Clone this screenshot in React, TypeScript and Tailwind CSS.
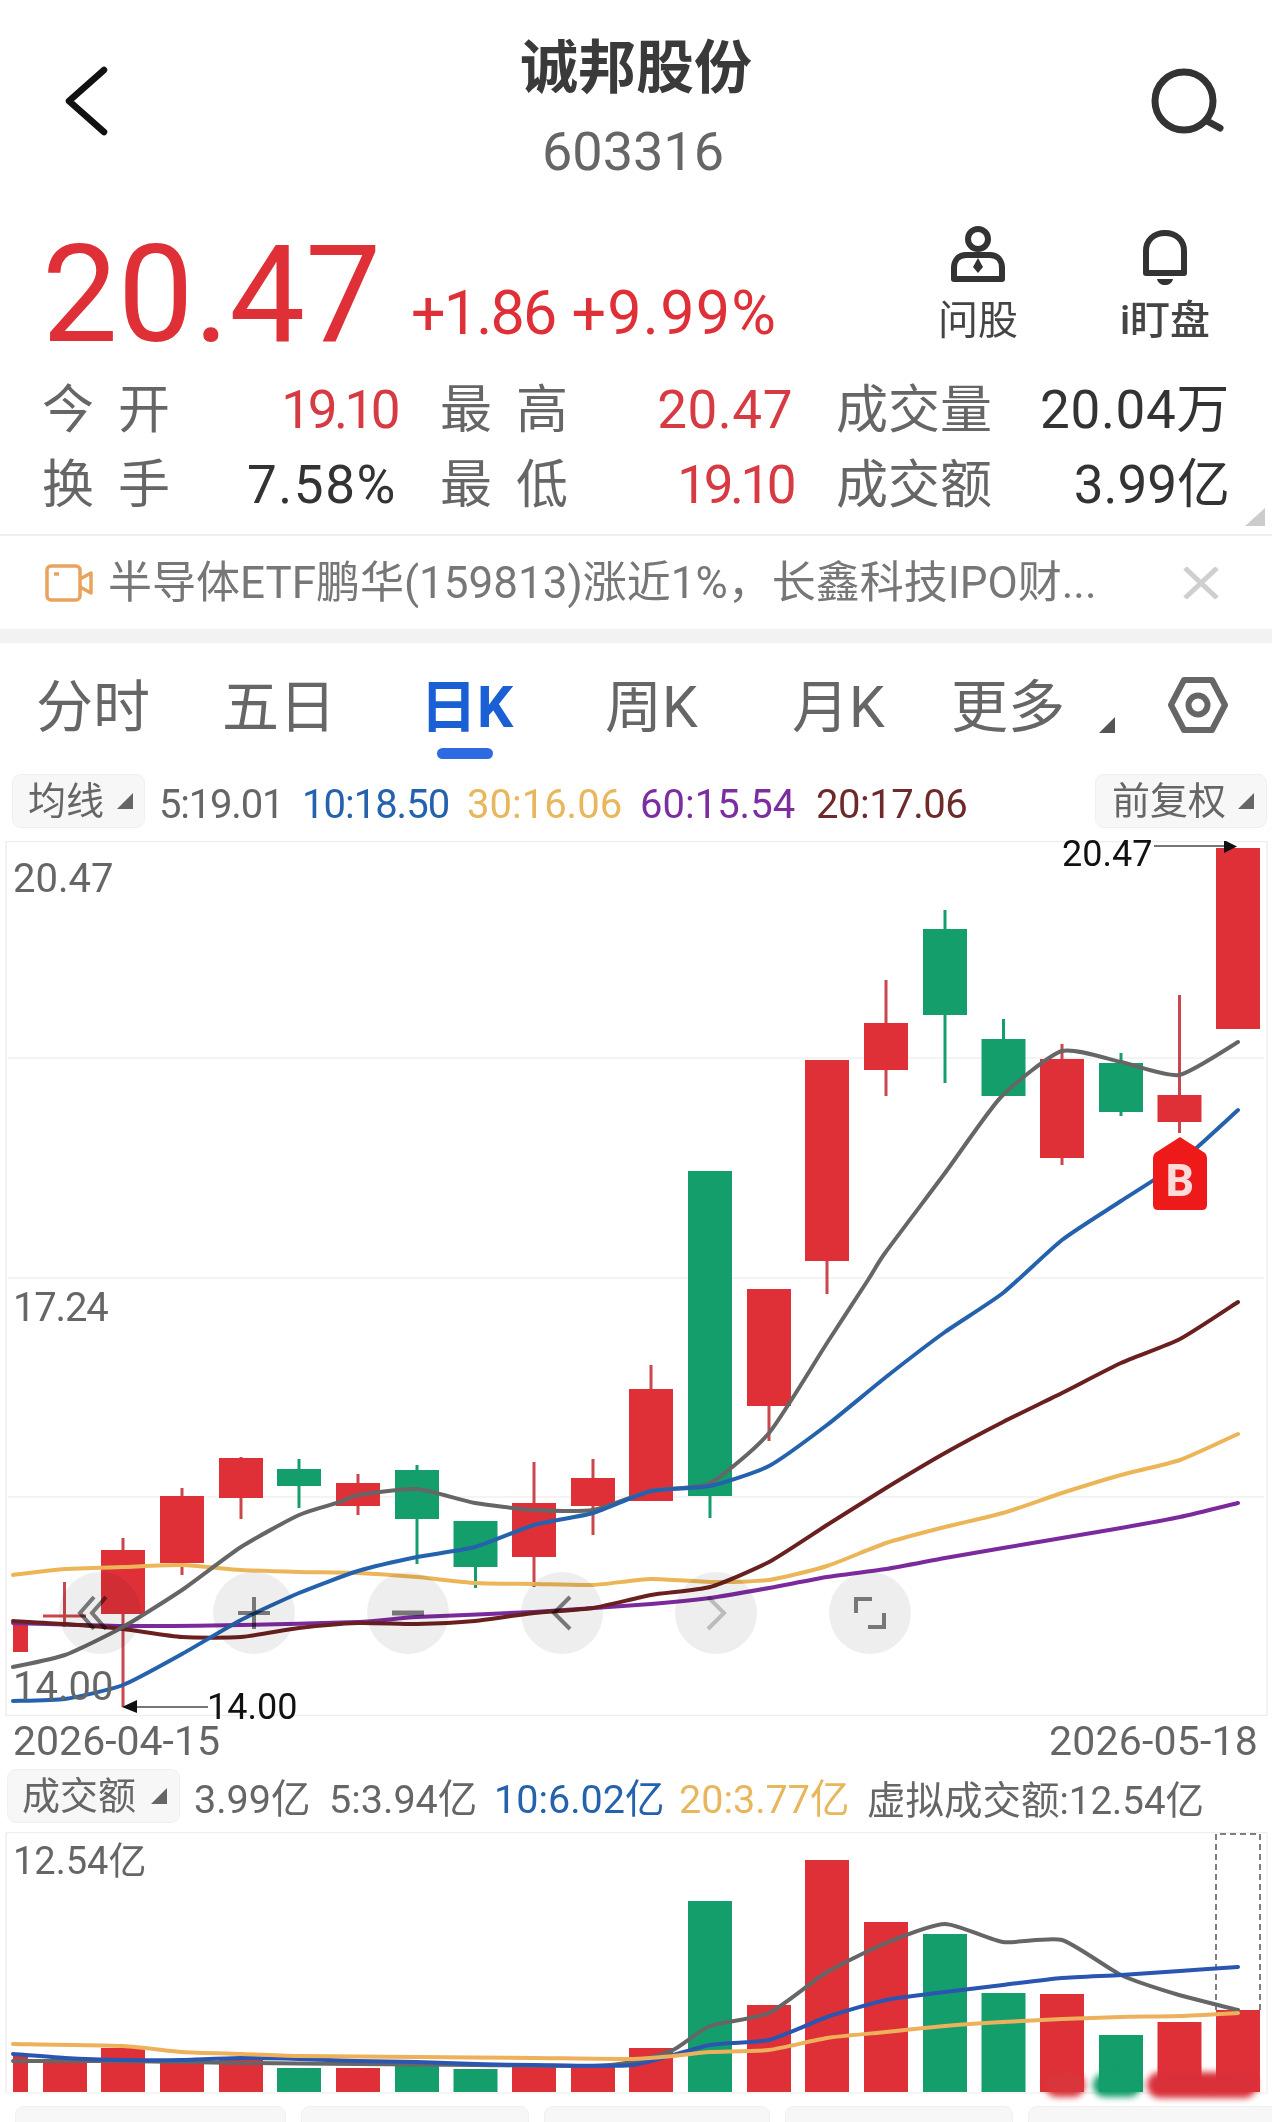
import React from "react";

const RED = "#df3038";
const GREEN = "#149e6c";
const GRAY = "#666666";
const BLUE = "#2562ad";
const ORANGE = "#ebb558";
const PURPLE = "#7b2a9e";
const BROWN = "#6b2020";

type Pt = [number, number];

function smooth(p: Pt[]): string {
  let d = `M${p[0][0]} ${p[0][1]}`;
  for (let i = 0; i < p.length - 1; i++) {
    const a = p[Math.max(0, i - 1)];
    const b = p[i];
    const c = p[i + 1];
    const e = p[Math.min(p.length - 1, i + 2)];
    const k = 0.1;
    d += ` C${b[0] + (c[0] - a[0]) * k} ${b[1] + (c[1] - a[1]) * k} ${c[0] - (e[0] - b[0]) * k} ${c[1] - (e[1] - b[1]) * k} ${c[0]} ${c[1]}`;
  }
  return d;
}

// center x, body top, body bottom, wick top, wick bottom, colour
const candles: [number, number, number, number, number, string][] = [
  [123, 1550, 1614, 1538, 1707, RED],
  [182, 1496, 1563, 1488, 1575, RED],
  [241, 1458, 1498, 1457, 1519, RED],
  [299, 1469, 1486, 1459, 1508, GREEN],
  [358, 1483, 1506, 1474, 1515, RED],
  [417, 1470, 1519, 1465, 1564, GREEN],
  [475.5, 1521, 1567, 1521, 1588, GREEN],
  [534, 1503, 1557, 1462, 1587, RED],
  [593, 1478, 1506, 1459, 1535, RED],
  [651, 1389, 1501, 1365, 1501, RED],
  [710, 1171, 1496, 1171, 1518, GREEN],
  [769, 1289, 1406, 1289, 1441, RED],
  [827, 1060, 1261, 1060, 1294, RED],
  [886, 1023, 1070, 980, 1096, RED],
  [945, 929, 1015, 910, 1083, GREEN],
  [1003.5, 1039, 1096, 1019, 1096, GREEN],
  [1062, 1059, 1158, 1044, 1165, RED],
  [1121, 1063, 1112, 1053, 1116, GREEN],
  [1179.5, 1095, 1122, 995, 1133, RED],
  [1238, 848, 1029, 848, 1029, RED],
];

const ma5: Pt[] = [[13,1667],[65,1655],[123,1627],[182,1590],[241,1547],[299,1515],[340,1502],[358,1495],[417,1489],[475,1503],[534,1510],[593,1510],[651,1491],[710,1483],[769,1433],[827,1343],[868,1280],[885,1253],[945,1173],[1001,1097],[1062,1051],[1121,1062],[1179,1075],[1238,1042]];
const ma10: Pt[] = [[13,1701],[65,1699],[123,1685],[182,1654],[241,1620],[299,1593],[358,1571],[417,1557],[475,1547],[534,1525],[593,1513],[651,1491],[710,1486],[769,1466],[827,1425],[886,1377],[945,1332],[1003,1293],[1062,1240],[1121,1201],[1179,1163],[1238,1110]];
const ma20: Pt[] = [[13,1621],[65,1624],[123,1629],[182,1637],[241,1637],[299,1628],[358,1623],[417,1624],[475,1621],[534,1613],[593,1608],[651,1595],[710,1587],[769,1562],[827,1525],[886,1488],[945,1453],[1003,1422],[1062,1393],[1121,1363],[1180,1339],[1238,1302]];
const ma30: Pt[] = [[13,1575],[65,1569],[123,1567],[182,1565],[241,1570],[299,1572],[358,1573],[417,1577],[475,1583],[534,1584],[593,1585],[651,1579],[710,1582],[769,1580],[827,1566],[886,1543],[945,1527],[1003,1513],[1062,1493],[1121,1475],[1180,1460],[1238,1434]];
const ma60: Pt[] = [[13,1623],[123,1626],[241,1625],[358,1622],[417,1617],[534,1612],[651,1604],[710,1598],[769,1588],[827,1577],[886,1569],[945,1558],[1003,1548],[1062,1538],[1121,1528],[1180,1517],[1238,1503]];

const bars: [number, number, string][] = [
  [65, 2063, RED],[123, 2048, RED],[182, 2062, RED],[241, 2058, RED],[299, 2068, GREEN],[358, 2068, RED],[417, 2063, GREEN],[475.5, 2069, GREEN],[534, 2067, RED],[593, 2065, RED],[651, 2048, RED],[710, 1901, GREEN],[769, 2005, RED],[827, 1860, RED],[886, 1922, RED],[945, 1934, GREEN],[1003.5, 1993, GREEN],[1062, 1994, RED],[1121, 2035, GREEN],[1179.5, 2022, RED],[1238, 2010, RED],
];
const v5: Pt[] = [[13,2061],[123,2061],[241,2063],[358,2064],[475,2065],[593,2066],[632,2062],[673,2050],[710,2026],[769,2013],[827,1972],[886,1943],[945,1924],[1003,1942],[1062,1940],[1121,1975],[1179,1995],[1238,2010]];
const v10: Pt[] = [[13,2054],[65,2058],[123,2060],[182,2060],[241,2058],[299,2059],[358,2061],[417,2062],[475,2064],[534,2065],[632,2065],[710,2045],[769,2040],[827,2017],[886,2000],[945,1992],[1003,1985],[1062,1978],[1121,1975],[1180,1971],[1238,1967]];
const v20: Pt[] = [[13,2044],[123,2046],[182,2052],[241,2054],[299,2056],[417,2057],[534,2058],[632,2059],[673,2056],[710,2052],[769,2050],[827,2038],[886,2032],[945,2026],[1003,2022],[1062,2019],[1121,2017],[1180,2016],[1238,2013]];

function Line({ p, c, w = 4 }: { p: Pt[]; c: string; w?: number }) {
  return <path d={smooth(p)} fill="none" stroke={c} strokeWidth={w} strokeLinejoin="round" strokeLinecap="round" />;
}

function Caret() {
  return (
    <svg width="16" height="16" viewBox="0 0 16 16" className="shrink-0">
      <path d="M16 0V16H0Z" fill="#666666" />
    </svg>
  );
}

function Chip({ label, className }: { label: string; className: string }) {
  return (
    <div className={`flex items-center justify-between rounded-[9px] border border-[#f0f0f0] bg-[#f7f7f7] text-[38px] leading-none text-[#666666] ${className}`}>
      <span>{label}</span>
      <Caret />
    </div>
  );
}

function Stat({ label, value, color, spaced, tracking }: { label: string; value: string; color: string; spaced?: boolean; tracking?: string }) {
  const chars = label.split("");
  return (
    <div className="flex h-[75px] items-center justify-between text-[52px] leading-none">
      {spaced ? (
        <div className="flex w-[128px] justify-between text-[#666666]">
          {chars.map((c) => (
            <span key={c}>{c}</span>
          ))}
        </div>
      ) : (
        <span className="text-[#666666]">{label}</span>
      )}
      <span className={`text-[53px] ${tracking ?? ""}`} style={{ color }}>
        {value}
      </span>
    </div>
  );
}

function RoundBtn({ children }: { children: React.ReactNode }) {
  return (
    <div className="flex h-[82px] w-[82px] items-center justify-center rounded-full bg-[#eeeeee] mix-blend-multiply">
      <svg width="60" height="60" viewBox="0 0 60 60" fill="none" stroke="#777777" strokeWidth="4">
        {children}
      </svg>
    </div>
  );
}

export default function App() {
  return (
    <div className="relative h-[2122px] w-[1272px] overflow-hidden bg-white font-[family-name:Roboto,'Noto_Sans_CJK_SC',sans-serif]">
      {/* Header */}
      <header className="grid h-[216px] grid-cols-[1fr_auto_1fr] pt-[39px]">
        <div className="pl-[63px] pt-[26px]">
          <svg width="46" height="72" viewBox="0 0 46 72" fill="none" stroke="#111111" strokeWidth="6.5" strokeLinecap="round" strokeLinejoin="round">
            <path d="M41 5L6 36L41 67" />
          </svg>
        </div>
        <div className="flex flex-col items-center">
          <h1 className="text-[58px] font-semibold leading-[58px] text-[#3a3a3a]">诚邦股份</h1>
          <p className="mt-[28px] pr-[6px] text-[54px] leading-[54px] text-[#666666]">603316</p>
        </div>
        <div className="flex justify-end pr-[47px] pt-[27px]">
          <svg width="76" height="72" viewBox="0 0 76 72" fill="none" stroke="#333333" strokeWidth="7" strokeLinecap="round">
            <circle cx="35" cy="35" r="29" />
            <path d="M58 55L71 62" />
          </svg>
        </div>
      </header>

      {/* Price */}
      <section className="flex h-[156px] items-start pl-[42px]">
        <div className="mt-[12px] text-[135px] leading-[135px] text-[#df3038]">20.47</div>
        <div className="ml-[30px] mt-[67px] flex gap-[16px] whitespace-nowrap text-[61px] leading-[61px] text-[#df3038]">
          <span className="tracking-[-0.03em]">+1.86</span>
          <span className="tracking-[0.02em]">+9.99%</span>
        </div>
        <div className="ml-auto flex gap-[67px] pr-[47px]">
          <div className="flex w-[120px] flex-col items-center">
            <svg width="60" height="62" viewBox="0 0 60 62" fill="none" stroke="#333333" strokeWidth="6" className="mt-[10px]">
              <circle cx="30" cy="13" r="10" />
              <path d="M18 29H42C50 29 54 35 54 42V53H6V42C6 35 10 29 18 29Z" strokeLinejoin="round" />
              <path d="M30 32L35 41L30 47L25 41Z" fill="#333333" stroke="none" />
            </svg>
            <span className="mt-[13px] text-[40px] leading-[40px] text-[#444444]">问股</span>
          </div>
          <div className="flex w-[120px] flex-col items-center">
            <svg width="48" height="60" viewBox="0 0 48 60" fill="none" className="mt-[12px]">
              <path d="M5 45V23C5 12 13 5 24 5C35 5 43 12 43 23V45Z" stroke="#333333" strokeWidth="6" strokeLinejoin="round" />
              <path d="M16 51H32C31 55 28 57 24 57C20 57 17 55 16 51Z" fill="#333333" />
            </svg>
            <span className="mt-[13px] text-[40px] font-medium leading-[40px] text-[#444444]">i盯盘</span>
          </div>
        </div>
      </section>

      {/* Stats */}
      <section className="relative h-[162px] pt-[1px]">
        <div className="grid grid-cols-[355px_353px_394px] gap-x-[43px] pl-[42px]">
          <Stat label="今开" spaced value="19.10" color="#d63a42" tracking="tracking-[-0.066em]" />
          <Stat label="最高" spaced value="20.47" color="#d63a42" tracking="tracking-[0.01em]" />
          <Stat label="成交量" value="20.04万" color="#333333" tracking="tracking-[0.012em]" />
          <Stat label="换手" spaced value="7.58%" color="#333333" tracking="tracking-[0.03em]" />
          <Stat label="最低" spaced value="19.10" color="#d63a42" tracking="tracking-[-0.066em]" />
          <Stat label="成交额" value="3.99亿" color="#333333" />
        </div>
        <svg width="20" height="18" viewBox="0 0 20 18" className="absolute right-[7px] top-[136px]">
          <path d="M20 0V18H0Z" fill="#cccccc" />
        </svg>
      </section>

      {/* News */}
      <section className="flex h-[95px] items-center border-t-2 border-[#efefef] pl-[45px] pr-[53px] pt-[1px]">
        <svg width="48" height="38" viewBox="0 0 48 38" fill="none" stroke="#e8a35c" strokeWidth="3.5" strokeLinejoin="round" className="shrink-0">
          <rect x="2" y="2" width="33" height="34" rx="4" />
          <path d="M35 15L46 9V29L35 23" />
          <path d="M9 10H14" />
        </svg>
        <span className="ml-[15px] whitespace-nowrap text-[44px] leading-none text-[#777777]">半导体ETF鹏华(159813)涨近1%，长鑫科技IPO财...</span>
        <svg width="36" height="32" viewBox="0 0 36 32" fill="none" stroke="#cfcfcf" strokeWidth="5" className="ml-auto shrink-0">
          <path d="M2 1L34 31M34 1L2 31" />
        </svg>
      </section>
      <div className="h-[14px] bg-[#f2f2f2]" />

      {/* Tabs */}
      <nav className="grid h-[128px] grid-cols-[186px_198px_185px_187px_159px_217px_60px] pl-[36px] pt-[36px] text-[57px] leading-[57px] text-[#666666]">
        <span>分时</span>
        <span>五日</span>
        <span className="relative font-bold text-[#1a5fd4]">
          日K
          <span className="absolute left-[17px] top-[69px] h-[11px] w-[56px] rounded-full bg-[#2f6be0]" />
        </span>
        <span>周K</span>
        <span>月K</span>
        <span className="flex items-start">
          更多
          <svg width="16" height="16" viewBox="0 0 16 16" className="ml-[34px] mt-[38px]">
            <path d="M16 0V16H0Z" fill="#555555" />
          </svg>
        </span>
        <svg width="60" height="56" viewBox="0 0 60 56" fill="none" stroke="#666666" strokeWidth="6" strokeLinejoin="round" className="mt-[-2px]">
          <path d="M16 3H44L57 28L44 53H16L3 28Z" />
          <circle cx="30" cy="28" r="9.5" />
        </svg>
      </nav>

      {/* MA legend */}
      <div className="grid h-[70px] grid-cols-[147px_143px_165px_173px_176px_279px_172px] items-start pl-[12px] pt-[3px] text-[40px] leading-[54px]">
        <Chip label="均线" className="h-[54px] w-[133px] pl-[15px] pr-[11px]" />
        <span className="mt-[4px] tracking-[-0.03em] text-[#666666]">5:19.01</span>
        <span className="mt-[4px] tracking-[-0.025em] text-[#2562ad]">10:18.50</span>
        <span className="mt-[4px] text-[#e8b65c]">30:16.06</span>
        <span className="mt-[4px] text-[#7c2ea0]">60:15.54</span>
        <span className="mt-[4px] tracking-[-0.012em] text-[#6e2a2a]">20:17.06</span>
        <Chip label="前复权" className="h-[54px] w-[172px] pl-[16px] pr-[12px]" />
      </div>

      {/* K-line chart */}
      <div className="relative h-[875px]">
        <svg width="1272" height="875" viewBox="0 841 1272 875" className="block">
          <path d="M6 841.5H1267V1715.5H6Z" fill="none" stroke="#eeeeee" strokeWidth="1.5" />
          {[1058, 1278, 1497].map((y) => (
            <path key={y} d={`M8 ${y}H1264`} stroke="#f0f0f0" strokeWidth="1.5" />
          ))}
          <path d="M64.5 1582V1627M43 1616H86" stroke="#c9474d" strokeWidth="3" />
          <rect x="13" y="1623" width="15" height="29" fill={RED} />
          {candles.map(([x, t, b, wt, wb, c]) => (
            <g key={x}>
              <rect x={x - 1.5} y={wt} width="3" height={wb - wt} fill={c === RED ? "#c9474d" : c} />
              <rect x={x - 22} y={t} width="44" height={b - t} fill={c} />
            </g>
          ))}
          <Line p={ma30} c={ORANGE} />
          <Line p={ma60} c={PURPLE} />
          <Line p={ma20} c={BROWN} />
          <Line p={ma5} c={GRAY} />
          <Line p={ma10} c={BLUE} />
          <path d="M1154 846H1226" stroke="#777777" strokeWidth="2" />
          <path d="M1224 840L1237 846.5L1224 853Z" fill="#111111" />
          <path d="M137 1707H208" stroke="#777777" strokeWidth="2" />
          <path d="M137 1700L122 1707L137 1713Z" fill="#111111" />
          <path d="M1180 1137L1205 1153Q1207 1155 1207 1158V1205Q1207 1210 1202 1210H1158Q1153 1210 1153 1205V1158Q1153 1155 1155 1153Z" fill="#ee1a1a" />
          <text x="1180" y="1196" textAnchor="middle" fontSize="44" fontWeight="800" fill="#fbdada">B</text>
        </svg>
        <span className="absolute left-[13px] top-[18px] text-[40px] leading-[40px] text-[#666666]">20.47</span>
        <span className="absolute left-[13px] top-[447px] text-[40px] leading-[40px] tracking-[-0.03em] text-[#666666]">17.24</span>
        <span className="absolute left-[13px] top-[826px] text-[40px] leading-[40px] text-[#666666]">14.00</span>
        <span className="absolute left-[1062px] top-[-5px] text-[36px] leading-[36px] text-[#111111]">20.47</span>
        <span className="absolute left-[207px] top-[848px] text-[36px] leading-[36px] text-[#111111]">14.00</span>
        <div className="absolute left-[59px] top-[731px] flex gap-[72px]">
          <RoundBtn>
            <path d="M24 14L10 30L24 46M36 14L22 30L36 46" />
          </RoundBtn>
          <RoundBtn>
            <path d="M30 14V46M14 30H46" />
          </RoundBtn>
          <RoundBtn>
            <path d="M14 30H46" strokeWidth="5" />
          </RoundBtn>
          <RoundBtn>
            <path d="M38 14L22 30L38 46" />
          </RoundBtn>
          <RoundBtn>
            <path d="M22 14L38 30L22 46" stroke="#bbbbbb" />
          </RoundBtn>
          <RoundBtn>
            <path d="M16 30V16H32M44 30V44H28" />
          </RoundBtn>
        </div>
      </div>

      {/* Dates */}
      <div className="flex h-[53px] items-start justify-between pl-[13px] pr-[14px] pt-[5px] text-[41px] leading-[41px] text-[#666666]">
        <span>2026-04-15</span>
        <span className="tracking-[0.005em]">2026-05-18</span>
      </div>

      {/* Volume legend */}
      <div className="grid h-[63px] grid-cols-[187px_135px_165px_185px_188px_1fr] items-start pl-[7px] text-[39.5px] leading-[54px]">
        <Chip label="成交额" className="h-[54px] w-[173px] pl-[14px] pr-[12px]" />
        <span className="mt-[4px] whitespace-nowrap text-[#666666]">3.99亿</span>
        <span className="mt-[4px] whitespace-nowrap text-[#666666]">5:3.94亿</span>
        <span className="mt-[4px] whitespace-nowrap text-[#2562ad]">10:6.02亿</span>
        <span className="mt-[4px] whitespace-nowrap text-[#e8b65c]">20:3.77亿</span>
        <span className="mt-[5px] whitespace-nowrap text-[38.5px] text-[#666666]">虚拟成交额:12.54亿</span>
      </div>

      {/* Volume chart */}
      <div className="relative h-[262px]">
        <svg width="1272" height="262" viewBox="0 1832 1272 262" className="block">
          <path d="M6 1832.5H1267M6 1832.5V2093" fill="none" stroke="#eeeeee" strokeWidth="1.5" />
          <path d="M1267 1832.5V2093M6 2093H1267" fill="none" stroke="#f2f2f2" strokeWidth="1.5" />
          <path d="M1216 2010V1834H1260V2010" fill="none" stroke="#555555" strokeWidth="1.5" strokeDasharray="6 4" />
          <rect x="13" y="2055" width="15" height="37" fill={RED} />
          {bars.map(([x, t, c]) => (
            <rect key={x} x={x - 22} y={t} width="44" height={2092 - t} fill={c} />
          ))}
          <Line p={v5} c={GRAY} />
          <Line p={v10} c="#2a55b0" />
          <Line p={v20} c="#eeb05a" />
        </svg>
        <span className="absolute left-[13px] top-[9px] text-[38px] leading-[40px] text-[#666666]">12.54亿</span>
        {/* blurred watermark */}
        <div className="absolute left-[1045px] top-[240px] flex items-center">
          <div className="h-[24px] w-[40px] rounded-full bg-[#d9363b] blur-[3px]" />
          <div className="ml-[8px] h-[24px] w-[48px] rounded-full bg-[#149e6c] blur-[3px]" />
          <div className="ml-[6px] h-[26px] w-[110px] rounded-full bg-[#d9303a] blur-[3px]" />
        </div>
      </div>

      {/* Cropped chips */}
      <div className="mt-[12px] flex gap-[15px] pl-[15px]">
        <div className="h-[40px] w-[271px] shrink-0 rounded-[9px] border border-[#f0f0f0] bg-[#f7f7f7]" />
        <div className="h-[40px] w-[228px] shrink-0 rounded-[9px] border border-[#f0f0f0] bg-[#f7f7f7]" />
        <div className="h-[40px] w-[226px] shrink-0 rounded-[9px] border border-[#f0f0f0] bg-[#f7f7f7]" />
        <div className="h-[40px] w-[228px] shrink-0 rounded-[9px] border border-[#f0f0f0] bg-[#f7f7f7]" />
        <div className="h-[40px] w-[260px] shrink-0 rounded-[9px] border border-[#f0f0f0] bg-[#f7f7f7]" />
      </div>
    </div>
  );
}
